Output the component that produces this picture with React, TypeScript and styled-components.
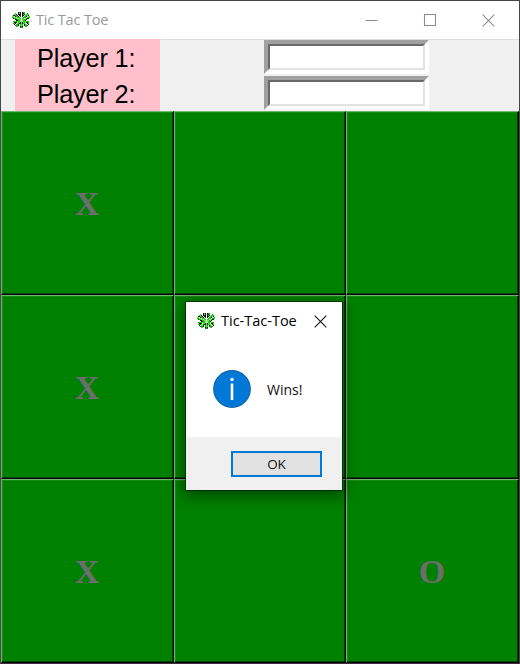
import React from 'react';
import styled, { createGlobalStyle } from 'styled-components';

const Global = createGlobalStyle`
  * { box-sizing: border-box; }
  html, body { margin: 0; padding: 0; overflow: hidden; }
  body { font-family: "Open Sans", "Noto Sans", sans-serif; }
`;

const Window = styled.div`
  position: relative;
  width: 520px;
  height: 664px;
  display: flex;
  flex-direction: column;
  background: #f0f0f0;
  border: 1px solid #464646;
  border-bottom-color: #3a2f3a;
`;

const TitleBar = styled.header`
  height: 38px;
  flex: none;
  display: flex;
  align-items: center;
  padding-left: 11px;
  background: #fff;
`;

const Title = styled.span<{ $active?: boolean }>`
  flex: 1;
  margin-left: 6px;
  font-size: 14.5px;
  line-height: 20px;
  white-space: nowrap;
  letter-spacing: ${p => (p.$active ? '0' : '-0.15px')};
  color: ${p => (p.$active ? '#000' : '#999')};
`;

const Controls = styled.div`
  display: flex;
  width: 177px;
`;

const ControlButton = styled.button`
  width: 58.5px;
  height: 36px;
  padding: 0;
  border: 0;
  background: none;
  display: flex;
  align-items: center;
  justify-content: center;
`;

const Players = styled.section`
  height: 72px;
  flex: none;
  display: grid;
  grid-template-columns: 145px 165px;
  column-gap: 104px;
  padding-left: 14px;
  border-top: 1px solid #dedede;
`;

const Labels = styled.div`
  margin-top: -1px;
  background: #ffc0cb;
  display: grid;
  grid-template-rows: 36px 36px;
`;

const Label = styled.label`
  padding-left: 22px;
  font: 25.3px/38px "Liberation Sans", Arial, sans-serif;
  letter-spacing: -0.17px;
  white-space: nowrap;
  color: #000;
`;

const Entries = styled.div`
  display: flex;
  flex-direction: column;
  gap: 2px;
`;

const Entry = styled.div`
  height: 34px;
  border: 4px solid;
  border-color: #a0a0a0 #fff #fff #a0a0a0;
`;

const Field = styled.input`
  display: block;
  width: 100%;
  height: 100%;
  padding: 0;
  outline: 0;
  border-radius: 0;
  background: #fff;
  border: 2px solid;
  border-color: #696969 #e3e3e3 #e3e3e3 #696969;
`;

const Board = styled.main`
  flex: 1;
  display: grid;
  grid-template-columns: 173px 172px 173px;
  grid-template-rows: 184px 184px 184px;
`;

const Cell = styled.button`
  padding: 1px 1px 0 0;
  background: #008000;
  border: 1px solid;
  border-color: #72b572 #000 #000 #72b572;
  border-radius: 0;
  box-shadow: inset -1px -1px #004600, inset 1px 1px #148a14;
  font: bold 34px/1 "Liberation Serif", "Times New Roman", serif;
  color: #6d6d6d;
`;

const Dialog = styled.div`
  position: absolute;
  left: 185px;
  top: 301px;
  width: 156px;
  height: 188px;
  display: flex;
  flex-direction: column;
  background: #fff;
  box-shadow: 0 0 0 1px rgba(0, 35, 0, .7), 0 4px 14px 2px rgba(0, 0, 0, .45);
`;

const DialogTitle = styled.div`
  height: 38px;
  display: flex;
  align-items: center;
  padding: 0 15px 0 11px;
`;

const Message = styled.div`
  height: 97px;
  display: flex;
  align-items: center;
  gap: 16px;
  padding: 1px 0 0 27px;
  font-size: 14px;
  letter-spacing: 0;
  color: #111;
`;

const Footer = styled.div`
  flex: 1;
  display: flex;
  justify-content: flex-end;
  padding: 14px 20px 0 0;
  background: #f0f0f0;
`;

const OkButton = styled.button`
  width: 91px;
  height: 26px;
  padding: 0;
  border: 2px solid #0078d7;
  border-radius: 0;
  background: #e1e1e1;
  font: 13.5px/20px "Open Sans", sans-serif;
  letter-spacing: -0.2px;
  color: #111;
`;

/* One character per pixel: K black, D dark green, G green, L light green. */
const clover = [
  '......KGK.KGG.....',
  '...G..KLK.KKG..G..',
  '..GLK.KKK.KGK.GGG.',
  '.KKGGK.KK.KK.GGLK.',
  'LL.KGGK.K.K.GGK.LG',
  'GGLL.GGG...GGG.GGG',
  '.KGGLL.GG.GG.LGKK.',
  '...KKGGLL.LLGGK...',
  '....KKGGL.LGGK....',
  '.GGGGLGG.L.GGLGGG.',
  '.LKKK.GLKLKLG.KKG.',
  '.GGK.LGKKLKGGL.KG.',
  '..K.GGK.GLG.KGL.K.',
  '...DGGK.GLG.KGGD..',
  '....GG..KGK..GG...',
  '........DGD.......',
];
const tones: Record<string, string> = { K: '#101610', D: '#1d681a', G: '#20c51c', L: '#5cf52c' };

const Clover = () => (
  <svg width="18" height="16" viewBox="0 0 18 16" shapeRendering="crispEdges">
    {clover.flatMap((row, y) =>
      [...row].map((c, x) =>
        c === '.' ? null : <rect key={`${x}-${y}`} x={x} y={y} width="1" height="1" fill={tones[c]} />
      )
    )}
  </svg>
);

const glyphs = {
  minimize: 'M.5 6.5h12',
  maximize: 'M1.5.5h11v11h-11z',
  close: 'M.7.7l11.6 11.6M12.3.7L.7 12.3',
};

const Glyph = ({ kind, color = '#8c8c8c' }: { kind: keyof typeof glyphs; color?: string }) => (
  <svg width="13" height="13" viewBox="0 0 13 13" fill="none" stroke={color} strokeWidth="1.1">
    <path d={glyphs[kind]} />
  </svg>
);

const InfoIcon = () => (
  <svg width="38" height="38" viewBox="0 0 38 38">
    <circle cx="19" cy="19" r="18.3" fill="#0078d7" stroke="#1265ab" strokeWidth="1.2" />
    <circle cx="19" cy="9.5" r="1.7" fill="#fff" />
    <path d="M19 13.5v16.5" stroke="#fff" strokeWidth="2.6" />
  </svg>
);

const marks = ['X', '', '', 'X', '', '', 'X', '', 'O'];

export default function App() {
  return (
    <>
      <Global />
      <Window>
        <TitleBar>
          <Clover />
          <Title>Tic Tac Toe</Title>
          <Controls>
            <ControlButton aria-label="Minimize"><Glyph kind="minimize" /></ControlButton>
            <ControlButton aria-label="Maximize"><Glyph kind="maximize" /></ControlButton>
            <ControlButton aria-label="Close"><Glyph kind="close" /></ControlButton>
          </Controls>
        </TitleBar>
        <Players>
          <Labels>
            <Label htmlFor="p1">Player 1:</Label>
            <Label htmlFor="p2">Player 2:</Label>
          </Labels>
          <Entries>
            <Entry><Field id="p1" /></Entry>
            <Entry><Field id="p2" /></Entry>
          </Entries>
        </Players>
        <Board>
          {marks.map((m, i) => <Cell key={i}>{m}</Cell>)}
        </Board>
        <Dialog role="dialog">
          <DialogTitle>
            <Clover />
            <Title $active>Tic-Tac-Toe</Title>
            <Glyph kind="close" color="#111" />
          </DialogTitle>
          <Message><InfoIcon />Wins!</Message>
          <Footer><OkButton>OK</OkButton></Footer>
        </Dialog>
      </Window>
    </>
  );
}
